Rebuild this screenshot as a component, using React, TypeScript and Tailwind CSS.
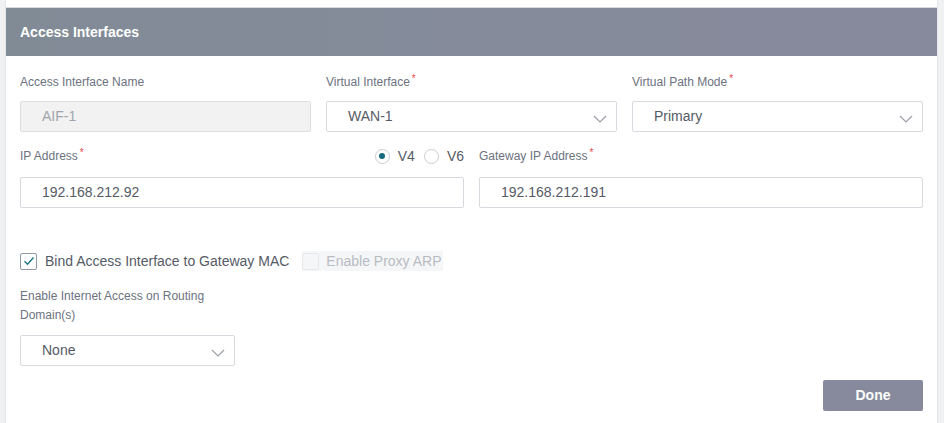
const font = "font-['Liberation_Sans',Arial,sans-serif]";

const Req = () => <span className="text-[#e5484d] text-[10px] align-top relative -top-[3px] ml-[2px]">*</span>;

const Label = ({ children, req }: { children: React.ReactNode; req?: boolean }) => (
    <div className="h-[20px] leading-[20px] text-[12px] text-[#6c7280]">
        {children}
        {req && <Req />}
    </div>
);

const TextBox = ({ value, disabled }: { value: string; disabled?: boolean }) => (
    <div
        className={
            "h-[31px] rounded-[2px] border flex items-center pl-[21px] text-[14px] " +
            (disabled ? "bg-[#f2f2f2] border-[#dcdee2] text-[#a0a5ad]" : "bg-white border-[#d6d9dd] text-[#555b66]")
        }
    >
        {value}
    </div>
);

const Chevron = () => (
    <svg width="14" height="8" viewBox="0 0 14 8" fill="none" className="mt-[4px]">
        <path d="M1 1 L7 7 L13 1" stroke="#9aa0a8" strokeWidth="1.2" />
    </svg>
);

const Select = ({ value, className }: { value: string; className?: string }) => (
    <div className={"h-[31px] rounded-[2px] border border-[#d6d9dd] bg-white flex items-center justify-between pl-[21px] pr-[9px] text-[14px] text-[#555b66] " + (className ?? "")}>
        <span>{value}</span>
        <Chevron />
    </div>
);

const Radio = ({ label, checked }: { label: string; checked?: boolean }) => (
    <label className="flex items-center gap-[8px]">
        <span className="w-[15px] h-[15px] rounded-full border border-[#c9ccd1] flex items-center justify-center bg-white">
            {checked && <span className="w-[6px] h-[6px] rounded-full bg-[#16697a]" />}
        </span>
        <span className="text-[14px] text-[#555b66]">{label}</span>
    </label>
);

export default function App() {
    return (
        <div className={"w-[944px] h-[423px] bg-[#f0f1f3] flex pl-[5px] pr-[6px] overflow-hidden " + font}>
            <div className="flex-1 bg-white border-l border-r border-[#e3e5e8] flex flex-col">
                <div className="mt-[7px] border-t border-[#d8dbe0] h-[49px] bg-gradient-to-r from-[#818b96] to-[#878a9d] flex items-center px-[14px]">
                    <h2 className="text-[14px] font-bold text-white">Access Interfaces</h2>
                </div>

                <div className="px-[14px] flex flex-col">
                    <div className="grid grid-cols-3 gap-x-[15px] mt-[16px]">
                        <div>
                            <Label>Access Interface Name</Label>
                            <div className="mt-[9px]"><TextBox value="AIF-1" disabled /></div>
                        </div>
                        <div>
                            <Label req>Virtual Interface</Label>
                            <Select value="WAN-1" className="mt-[9px]" />
                        </div>
                        <div>
                            <Label req>Virtual Path Mode</Label>
                            <Select value="Primary" className="mt-[9px]" />
                        </div>
                    </div>

                    <div className="grid grid-cols-2 gap-x-[15px] mt-[14px]">
                        <div>
                            <div className="flex items-center justify-between h-[20px]">
                                <Label req>IP Address</Label>
                                <div className="flex items-center gap-[9px]">
                                    <Radio label="V4" checked />
                                    <Radio label="V6" />
                                </div>
                            </div>
                            <div className="mt-[11px]"><TextBox value="192.168.212.92" /></div>
                        </div>
                        <div>
                            <Label req>Gateway IP Address</Label>
                            <div className="mt-[11px]"><TextBox value="192.168.212.191" /></div>
                        </div>
                    </div>

                    <div className="flex items-center mt-[43px] h-[20px]">
                        <span className="w-[17px] h-[17px] border border-[#8e9aa5] rounded-[2px] flex items-center justify-center bg-white">
                            <svg width="12" height="10" viewBox="0 0 12 10" fill="none">
                                <path d="M1.5 5.2 L4.5 8.2 L10.5 1.5" stroke="#1d7486" strokeWidth="1.4" />
                            </svg>
                        </span>
                        <span className="ml-[8px] text-[14px] text-[#555b66]">Bind Access Interface to Gateway MAC</span>
                        <div className="ml-[13px] bg-[#f5f6f7] flex items-center h-[20px] pr-[1px]">
                            <span className="w-[17px] h-[17px] border border-[#e6e8eb] rounded-[2px] bg-[#f5f6f7]" />
                            <span className="ml-[7px] text-[14px] text-[#b8bcc3]">Enable Proxy ARP</span>
                        </div>
                    </div>

                    <div className="mt-[16px] w-[200px] text-[12px] leading-[19px] text-[#6c7280]">
                        Enable Internet Access on Routing Domain(s)
                    </div>
                    <Select value="None" className="mt-[10px] w-[215px]" />

                    <div className="flex justify-end mt-[14px]">
                        <button className="w-[100px] h-[31px] rounded-[2px] bg-[#868a9c] text-white text-[14px] font-bold">Done</button>
                    </div>
                </div>
            </div>
        </div>
    );
}
